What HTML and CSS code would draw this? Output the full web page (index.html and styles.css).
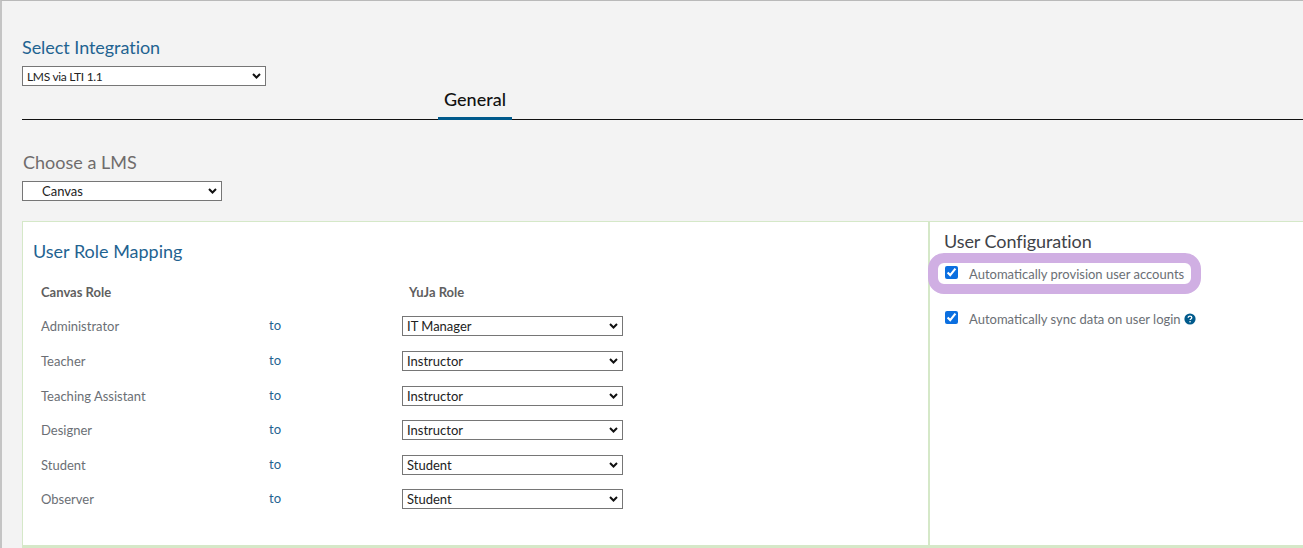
FILE: index.html
```html
<!DOCTYPE html>
<html lang="en">
<head>
<meta charset="utf-8">
<title>Select Integration</title>
<link rel="stylesheet" href="styles.css">
</head>
<body>
<main class="page">
  <h2 class="title title-blue">Select Integration</h2>
  <select class="sel sel-integration"><option>LMS via LTI 1.1</option></select>
  <div class="tabs"><div class="tab">General</div></div>
  <h2 class="title title-grey">Choose a LMS</h2>
  <select class="sel sel-lms"><option>Canvas</option></select>
  <section class="panel">
    <div class="mapping">
      <h3 class="map-title">User Role Mapping</h3>
      <div class="roles">
        <div class="role-head">Canvas Role</div><div></div><div class="role-head yuja">YuJa Role</div>
        <div class="role">Administrator</div><div class="to">to</div><select class="sel sel-role"><option>IT Manager</option></select>
        <div class="role">Teacher</div><div class="to">to</div><select class="sel sel-role"><option>Instructor</option></select>
        <div class="role">Teaching Assistant</div><div class="to">to</div><select class="sel sel-role"><option>Instructor</option></select>
        <div class="role">Designer</div><div class="to">to</div><select class="sel sel-role"><option>Instructor</option></select>
        <div class="role">Student</div><div class="to">to</div><select class="sel sel-role"><option>Student</option></select>
        <div class="role">Observer</div><div class="to">to</div><select class="sel sel-role"><option>Student</option></select>
      </div>
    </div>
    <aside class="config">
      <h3 class="cfg-title">User Configuration</h3>
      <label class="check highlight"><input type="checkbox" checked><span>Automatically provision user accounts</span></label>
      <label class="check second"><input type="checkbox" checked><span>Automatically sync data on user login</span>
        <svg class="help" viewBox="0 0 12 12" width="12" height="12" aria-hidden="true"><circle cx="6" cy="6" r="5.6" fill="#005a8c"/><path d="M4.2 4.7c0-1 .8-1.6 1.8-1.6s1.8.6 1.8 1.5c0 1.3-1.7 1.3-1.7 2.5" fill="none" stroke="#fff" stroke-width="1.3"/><rect x="5.4" y="8" width="1.3" height="1.4" fill="#fff"/></svg>
      </label>
    </aside>
  </section>
</main>
</body>
</html>
```

FILE: styles.css
```css
* { box-sizing: border-box; }
html, body { margin: 0; height: 100%; overflow: hidden; }
body {
  background: #f3f3f3;
  font-family: Lato, "Open Sans", sans-serif;
  color: #5f6368;
}
.page {
  height: 548px;
  border-top: 1px solid #b9b9b9;
  border-left: 2px solid #c4c4c4;
  padding: 36px 0 0 20px;
  overflow: hidden;
}
.title { margin: 0; font-size: 18px; font-weight: 400; line-height: 20px; }
.title-blue { color: #1f6391; letter-spacing: -0.05px; }
.title-grey { color: #6f6c6c; margin-top: 32px; padding-left: 1px; }
.sel {
  display: block;
  appearance: none;
  -webkit-appearance: none;
  height: 20px;
  background: #fff url("data:image/svg+xml,%3Csvg xmlns='http://www.w3.org/2000/svg' width='9' height='6' viewBox='0 0 9 6'%3E%3Cpath d='M1 1l3.5 3.5L8 1' fill='none' stroke='%23111' stroke-width='2'/%3E%3C/svg%3E") no-repeat right 4px center;
  border: 1px solid #767676;
  border-radius: 0;
  font-family: Lato, "Open Sans", sans-serif;
  font-size: 13px;
  color: #222;
  padding: 0 16px 0 4px;
}
.sel-integration { width: 244px; margin-top: 9px; font-size: 12px; letter-spacing: -0.3px; }
.sel-lms { width: 200px; margin-top: 9px; padding-left: 19px; }
.sel-role { width: 221px; }
.tabs {
  height: 34px;
  border-bottom: 1px solid #111;
  padding-left: 416px;
}
.tab {
  width: 74px;
  height: 34px;
  border-bottom: 3px solid #005a8c;
  font-size: 18px;
  font-weight: 500;
  color: #111;
  text-align: center;
  line-height: 26px;
}
.panel {
  display: flex;
  width: 1320px;
  height: 327px;
  margin-top: 20px;
  background: #fff;
  border: 1px solid #d5e8c8;
  border-bottom-width: 3px;
}
.mapping {
  width: 907px;
  border-right: 2px solid #d5e8c8;
  padding: 19px 0 0 10px;
}
.map-title { margin: 0; font-size: 18px; font-weight: 400; line-height: 20px; color: #1f6391; }
.roles {
  display: grid;
  grid-template-columns: 228px 133px 221px;
  grid-template-rows: 19.8px repeat(6, 20px);
  row-gap: 14.6px;
  margin: 21px 0 0 8px;
  align-items: center;
  font-size: 13px;
}
.role-head { font-weight: 700; color: #5f5f5f; }
.yuja { padding-left: 7px; }
.role { color: #6b6f75; }
.to { color: #1f6391; margin-top: -2px; }
.config { flex: 1; padding: 9px 0 0 14px; }
.cfg-title { margin: 0; font-size: 18px; font-weight: 400; line-height: 20px; color: #3f4348; letter-spacing: -0.08px; }
.check { display: flex; align-items: center; font-size: 13px; color: #6b6f75; }
.check input { width: 13px; height: 13px; margin: -3px 11px 0 1px; accent-color: #0b6fe0; }
.highlight {
  width: 273px;
  height: 41px;
  margin: 2px 0 0 -16px;
  background: #fff;
  border: 10px solid #d0afe3;
  border-radius: 16px;
  padding-left: 6px;
}
.second { margin-top: 15px; height: 20px; }
.help { margin-left: 3px; }
```
